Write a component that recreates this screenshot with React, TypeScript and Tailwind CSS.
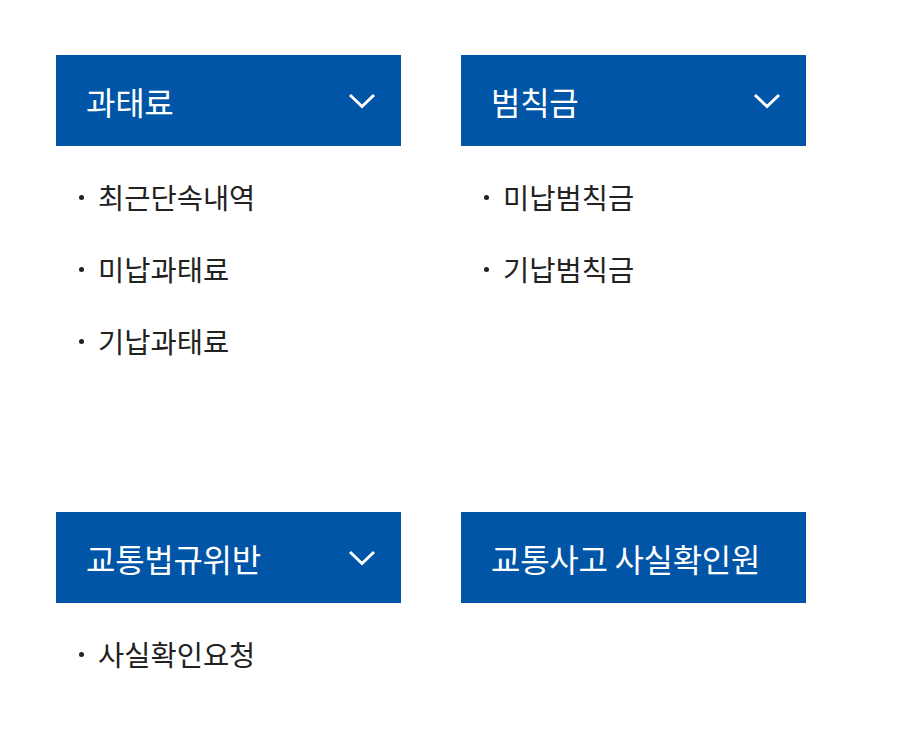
import React from "react";

const Chevron = () => (
  <svg width="28" height="16" viewBox="0 0 28 16" fill="none" className="shrink-0">
    <path d="M2 2 L14 13.5 L26 2" stroke="white" strokeWidth="3" strokeLinecap="butt" strokeLinejoin="miter" />
  </svg>
);

type Section = { title: string; items: string[]; chevron: boolean };

const Card = ({ s }: { s: Section }) => (
  <div className="w-[345px]">
    <div className="h-[91px] bg-[#0055a6] flex items-center justify-between pl-[30px] pr-[25px]">
      <span className="text-white text-[32px] leading-none tracking-[-0.3px]">{s.title}</span>
      {s.chevron && <Chevron />}
    </div>
    {s.items.length > 0 && (
      <ul className="pt-[15px]">
        {s.items.map((it) => (
          <li key={it} className="h-[72px] flex items-center pl-[23px] text-[#222] text-[28.5px]">
            <span className="w-[5px] h-[5px] rounded-full bg-[#222] mr-[14px] shrink-0"></span>
            <span className="leading-none">{it}</span>
          </li>
        ))}
      </ul>
    )}
  </div>
);

export default function App() {
  const row1: Section[] = [
    { title: "과태료", items: ["최근단속내역", "미납과태료", "기납과태료"], chevron: true },
    { title: "범칙금", items: ["미납범칙금", "기납범칙금"], chevron: true },
  ];
  const row2: Section[] = [
    { title: "교통법규위반", items: ["사실확인요청"], chevron: true },
    { title: "교통사고 사실확인원", items: [], chevron: false },
  ];
  return (
    <div
      className="min-h-[743px] bg-white pt-[55px] pl-[56px]"
      style={{ fontFamily: '"Noto Sans CJK KR", "Noto Sans", sans-serif' }}
    >
      <div className="flex gap-[60px] items-start">
        {row1.map((s) => (
          <Card key={s.title} s={s} />
        ))}
      </div>
      <div className="flex gap-[60px] items-start mt-[135px]">
        {row2.map((s) => (
          <Card key={s.title} s={s} />
        ))}
      </div>
    </div>
  );
}
